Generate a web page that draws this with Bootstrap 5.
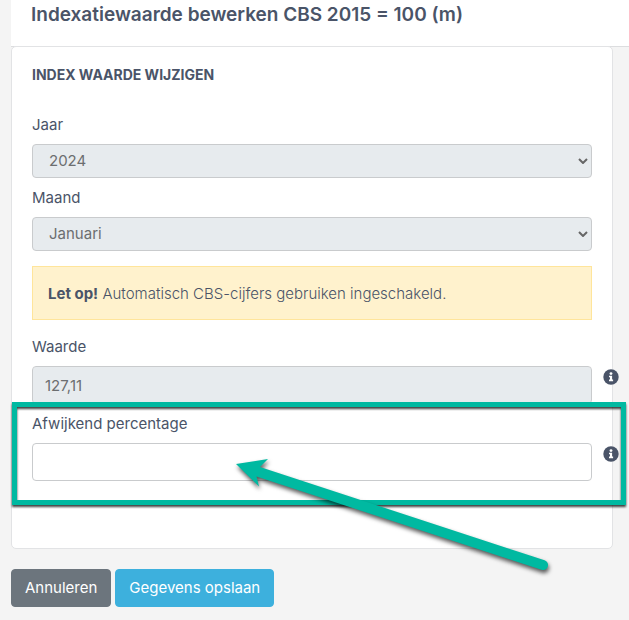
<!DOCTYPE html>
<html lang="nl">
<head>
<meta charset="utf-8">
<meta name="viewport" content="width=device-width, initial-scale=1">
<title>Indexatiewaarde bewerken</title>
<link href="https://cdn.jsdelivr.net/npm/bootstrap@5.3.0/dist/css/bootstrap.min.css" rel="stylesheet">
<style>
  body { background: #f4f4f4; color: #4a5468; font-family: Inter, "Liberation Sans", sans-serif; font-size: 15px; line-height: 22px; }
  .page-head { margin-left: 11px; padding: 3px 20px 19px; border-bottom: 1px solid #dcdddf; }
  .page-title { font-size: 19px; line-height: 24px; font-weight: 600; }
  .page-main { padding: 0 16px 13px 11px; }
  .edit-card { margin-top: -1px; margin-bottom: 20px; border: 1px solid #e2e3e5; border-radius: 5px; }
  .edit-card .card-body { padding: 17px 20px 67px; }
  .section-title { font-size: 14px; line-height: 22px; font-weight: 700; margin-bottom: 28px; }
  .field { margin-bottom: 9px; }
  .form-label { font-size: 15px; margin-bottom: 8px; display: block; }
  .form-control, .form-select { font-size: 15px; line-height: 24px; border: 1px solid #c9cbcd; border-radius: 4px; color: #6c6e70; }
  .form-control { height: 38px; padding: 6px 12px; }
  .form-select { height: 34px; padding: 4px 24px 4px 16px; background-size: 10px 6px; background-position: right 3px center;
    background-image: url("data:image/svg+xml,%3Csvg xmlns='http://www.w3.org/2000/svg' viewBox='0 0 10 6'%3E%3Cpath d='M1 1l4 4 4-4' fill='none' stroke='%23666' stroke-width='2'/%3E%3C/svg%3E"); }
  .form-control:disabled, .form-select:disabled { background-color: #e7ebee; color: #6c6e70; }
  .notice { background: #fff2cd; border: 1px solid #ffe59b; border-radius: 0; color: inherit; font-weight: 300; padding: 16px 15px 14px; margin: 15px 0 16px; }
  .notice strong { font-weight: 700; }
  .with-info { gap: 11px; margin-right: -27px; }
  .info-btn { width: 16px; height: 16px; margin-top: 3px; }
  .info-btn svg { display: block; }
  .highlight { inset: -11px -34px -24px -20px; border: 5px solid #00b9a1; filter: drop-shadow(0 2px 1px rgba(0,0,0,.75)); pointer-events: none; }
  .pointer-arrow { left: 180px; top: 30px; filter: drop-shadow(1px 3px 2px rgba(0,0,0,.65)); pointer-events: none; }
  .btn { font-size: 15px; line-height: 24px; padding: 6px 13px; border-radius: 4px; }
  .btn-cancel, .btn-cancel:hover { background: #6c757d; border-color: #6c757d; color: #fff; }
  .btn-save, .btn-save:hover { background: #3db0dd; border-color: #3db0dd; color: #fff; }
</style>
<script src="https://cdn.jsdelivr.net/npm/bootstrap@5.3.0/dist/js/bootstrap.bundle.min.js"></script>
</head>
<body>
<header class="page-head bg-white">
  <h1 class="page-title mb-0">Indexatiewaarde bewerken CBS 2015 = 100 (m)</h1>
</header>
<main class="page-main">
  <form>
    <div class="card edit-card">
      <div class="card-body">
        <h2 class="section-title text-uppercase">Index waarde wijzigen</h2>
        <div class="field">
          <label class="form-label" for="year">Jaar</label>
          <select class="form-select" id="year" disabled><option>2024</option></select>
        </div>
        <div>
          <label class="form-label" for="month">Maand</label>
          <select class="form-select" id="month" disabled><option>Januari</option></select>
        </div>
        <div class="alert notice" role="alert"><strong>Let op!</strong> Automatisch CBS-cijfers gebruiken ingeschakeld.</div>
        <div class="field">
          <label class="form-label" for="value">Waarde</label>
          <div class="d-flex align-items-start with-info">
            <input class="form-control" id="value" type="text" value="127,11" disabled>
            <button class="info-btn border-0 p-0 bg-transparent flex-shrink-0" type="button" aria-label="Informatie over waarde">
              <svg width="16" height="16" viewBox="0 0 16 16"><circle cx="8" cy="8" r="7.7" fill="#4a5468"/><circle cx="8" cy="4.6" r="1.4" fill="#fff"/><path d="M6 6.8h3.1v3.8h1v1.6H6v-1.6h1V8.3H6z" fill="#fff"/></svg>
            </button>
          </div>
        </div>
        <div class="position-relative">
          <label class="form-label" for="percentage">Afwijkend percentage</label>
          <div class="d-flex align-items-start with-info">
            <input class="form-control" id="percentage" type="text">
            <button class="info-btn border-0 p-0 bg-transparent flex-shrink-0" type="button" aria-label="Informatie over afwijkend percentage">
              <svg width="16" height="16" viewBox="0 0 16 16"><circle cx="8" cy="8" r="7.7" fill="#4a5468"/><circle cx="8" cy="4.6" r="1.4" fill="#fff"/><path d="M6 6.8h3.1v3.8h1v1.6H6v-1.6h1V8.3H6z" fill="#fff"/></svg>
            </button>
          </div>
          <div class="highlight position-absolute"></div>
          <svg class="pointer-arrow position-absolute" width="344" height="134" viewBox="0 0 344 134" aria-hidden="true">
            <path d="M24 21L56 16L48 24L332.600 117.300A5 5 0 0 1 329.400 126.800L44.500 33.500L47 43.500Z" fill="#00b9a1"/>
          </svg>
        </div>
      </div>
    </div>
    <div class="d-flex gap-1">
      <button class="btn btn-cancel" type="button">Annuleren</button>
      <button class="btn btn-save" type="submit">Gegevens opslaan</button>
    </div>
  </form>
</main>
</body>
</html>
